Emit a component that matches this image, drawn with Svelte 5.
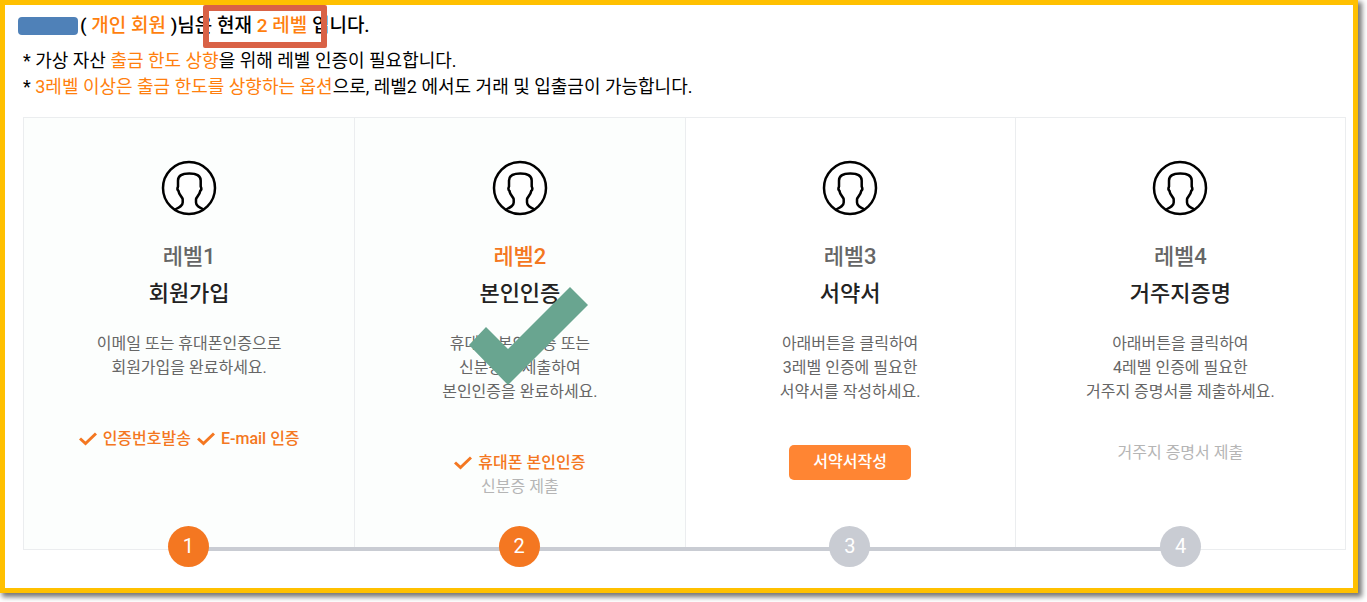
<script>
  const levels = [
    {
      name: '레벨1',
      title: '회원가입',
      lines: ['이메일 또는 휴대폰인증으로', '회원가입을 완료하세요.'],
      done: ['인증번호발송', 'E-mail 인증'],
      reached: true
    },
    {
      name: '레벨2',
      title: '본인인증',
      lines: ['휴대폰 본인인증 또는', '신분증을 제출하여', '본인인증을 완료하세요.'],
      done: ['휴대폰 본인인증'],
      pending: '신분증 제출',
      reached: true,
      current: true
    },
    {
      name: '레벨3',
      title: '서약서',
      lines: ['아래버튼을 클릭하여', '3레벨 인증에 필요한', '서약서를 작성하세요.'],
      action: '서약서작성'
    },
    {
      name: '레벨4',
      title: '거주지증명',
      lines: ['아래버튼을 클릭하여', '4레벨 인증에 필요한', '거주지 증명서를 제출하세요.'],
      pending: '거주지 증명서 제출'
    }
  ];
</script>

<main class="frame">
  <header>
    <h1>
      <span class="user"></span>(&nbsp;<em>개인 회원</em>&nbsp;)님은&nbsp;<span class="marked">현재 <em>2 레벨</em> 입</span>니다.
    </h1>
    <p>* 가상 자산 <em>출금 한도 상향</em>을 위해 레벨 인증이 필요합니다.</p>
    <p>* <em>3레벨 이상은 출금 한도를 상향하는 옵션</em>으로, 레벨2 에서도 거래 및 입출금이 가능합니다.</p>
  </header>

  <section class="levels">
    {#each levels as level}
      <article class:reached={level.reached} class:current={level.current}>
        <svg class="avatar" viewBox="0 0 56 56" aria-hidden="true">
          <circle cx="28" cy="28" r="26" />
          <path d="M14 49.500C18 47.500 21.700 46 21.700 42.500V39.500C21.700 37 18 35.500 17.500 31C16.300 30 16.300 28 17 26.500V20.500C17 15.500 21 13.500 28.300 13.500S39.700 15.500 39.700 20.500V26.500C40.500 28 40.500 30 39.200 31C38.700 35.500 35 37 35 39.500V42.500C35 46 38.500 47.500 42.500 49.500" />
        </svg>
        <h2>{level.name}</h2>
        <h3>{level.title}</h3>
        <p class="desc">{#each level.lines as line}<span>{line}</span>{/each}</p>
        <div class="status">
          {#if level.done}
            <div class="done">
              {#each level.done as item}
                <span class="item">
                  <svg class="tick" viewBox="0 0 18 14" aria-hidden="true"><path d="M1 6.500L6.500 11.500L17 1.500" /></svg>{item}
                </span>
              {/each}
            </div>
          {/if}
          {#if level.action}<button type="button">{level.action}</button>{/if}
          {#if level.pending}<span class="pending">{level.pending}</span>{/if}
        </div>
        {#if level.current}
          <svg class="stamp" viewBox="0 0 120 98" aria-hidden="true">
            <path d="M101 0L119 18L39 98L0 58L17 40L39 62Z" />
          </svg>
        {/if}
      </article>
    {/each}
  </section>

  <ol class="steps">
    {#each levels as level, i}
      <li class:reached={level.reached}><span>{i + 1}</span></li>
    {/each}
  </ol>
</main>

<style>
  :global(body) {
    margin: 0;
    background: #fff;
  }
  .frame {
    margin: 0 9px 9px 0;
    padding: 5px 7px 21px 18px;
    border: 5px solid #ffc000;
    box-shadow: 3px 3px 5px 1px #777;
    background: #fff;
    color: #000;
    font-family: Roboto, "Noto Sans CJK KR", sans-serif;
    font-size: 16px;
  }
  h1, h2, h3, p, ol {
    margin: 0;
    padding: 0;
    font-weight: 400;
  }
  em {
    font-style: normal;
    color: #ff7f0e;
  }
  h1 {
    display: flex;
    align-items: center;
    margin-left: -5px;
    font-size: 19px;
    line-height: 32px;
    font-weight: 500;
    white-space: pre;
  }
  .user {
    width: 60px;
    height: 18px;
    margin-right: 2px;
    border-radius: 4px;
    background: #4f81b8;
  }
  .marked {
    position: relative;
  }
  .marked::after {
    content: "";
    position: absolute;
    inset: -5px 2px -6px -14px;
    border: 6px solid #d96246;
    border-radius: 2px;
  }
  header {
    padding-bottom: 17px;
  }
  header p {
    font-size: 18px;
    line-height: 26px;
  }
  h1 + p {
    margin-top: 6px;
  }
  .levels {
    display: grid;
    grid-template-columns: repeat(4, 1fr);
    border: 1px solid #ebedef;
  }
  article {
    position: relative;
    display: flex;
    flex-direction: column;
    align-items: center;
    min-height: 389px;
    padding: 42px 8px 0;
    text-align: center;
  }
  article + article {
    border-left: 1px solid #ebedef;
  }
  article.reached {
    background: #fcfefd;
  }
  .avatar {
    width: 56px;
    height: 56px;
    fill: #fff;
    stroke: #000;
    stroke-width: 2.500;
  }
  h2 {
    margin-top: 22px;
    font-size: 22px;
    line-height: 37px;
    font-weight: 500;
    color: #666;
  }
  .current h2 {
    color: #f47721;
  }
  h3 {
    font-size: 22px;
    line-height: 37px;
    font-weight: 500;
    color: #222;
  }
  .desc {
    margin-top: 20px;
    line-height: 24px;
    color: #666;
  }
  .desc span {
    display: block;
  }
  .status {
    display: flex;
    flex-direction: column;
    align-items: center;
    margin-top: 37px;
    line-height: 24px;
  }
  .done {
    display: flex;
    gap: 6px;
    margin-top: 10px;
    color: #f47721;
    font-weight: 500;
  }
  .item {
    display: flex;
    align-items: center;
    gap: 6px;
  }
  .tick {
    width: 18px;
    height: 14px;
    fill: none;
    stroke: #f47721;
    stroke-width: 3;
  }
  .pending {
    color: #b5b5b5;
  }
  button {
    margin-top: 4px;
    padding: 5px 24px 6px;
    border: 0;
    border-radius: 5px;
    background: #ff8533;
    color: #fff;
    font: inherit;
    font-weight: 500;
    line-height: 24px;
  }
  .stamp {
    position: absolute;
    top: 169px;
    left: calc(50% - 51px);
    width: 120px;
    height: 98px;
    fill: #69a590;
  }
  .steps {
    position: relative;
    display: grid;
    grid-template-columns: repeat(4, 1fr);
    margin-top: -24px;
    list-style: none;
  }
  .steps li {
    position: relative;
    display: flex;
    justify-content: center;
  }
  .steps li:not(:last-child)::after {
    content: "";
    position: absolute;
    top: 21px;
    left: 50%;
    width: 100%;
    height: 4px;
    background: #c9ccd3;
  }
  .steps span {
    position: relative;
    z-index: 1;
    width: 41px;
    border-radius: 50%;
    background: #c9ccd3;
    color: #fff;
    font-size: 20px;
    line-height: 41px;
    text-align: center;
  }
  .steps .reached span {
    background: #f47721;
  }
</style>
